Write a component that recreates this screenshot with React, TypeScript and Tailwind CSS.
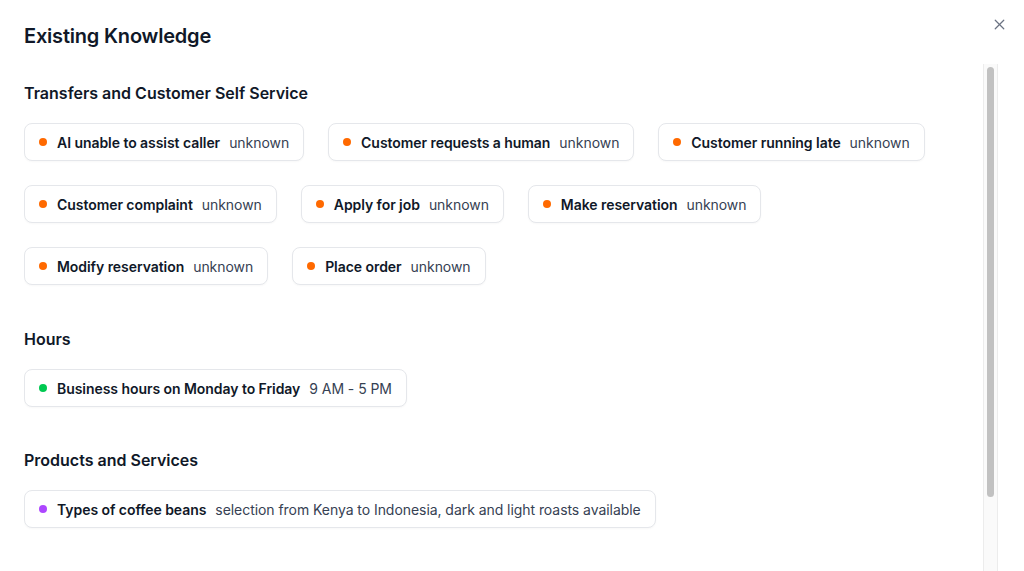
import { X } from "lucide-react";

interface Fact {
  label: string;
  value: string;
}

interface Section {
  title: string;
  dot: string;
  gap: string;
  items: Fact[];
}

const sections: Section[] = [
  {
    title: "Transfers and Customer Self Service",
    dot: "bg-orange-500",
    gap: "",
    items: [
      { label: "AI unable to assist caller", value: "unknown" },
      { label: "Customer requests a human", value: "unknown" },
      { label: "Customer running late", value: "unknown" },
      { label: "Customer complaint", value: "unknown" },
      { label: "Apply for job", value: "unknown" },
      { label: "Make reservation", value: "unknown" },
      { label: "Modify reservation", value: "unknown" },
      { label: "Place order", value: "unknown" },
    ],
  },
  {
    title: "Hours",
    dot: "bg-green-500",
    gap: "mt-[42px]",
    items: [{ label: "Business hours on Monday to Friday", value: "9 AM - 5 PM" }],
  },
  {
    title: "Products and Services",
    dot: "bg-purple-500",
    gap: "mt-[41px]",
    items: [
      {
        label: "Types of coffee beans",
        value: "selection from Kenya to Indonesia, dark and light roasts available",
      },
    ],
  },
];

function FactChip({ fact, dot }: { fact: Fact; dot: string }) {
  return (
    <div className="flex h-[38px] items-center rounded-lg border border-gray-200 bg-white px-[14px] text-[14px] tracking-[-0.004em] shadow-[0_1px_2px_rgba(0,0,0,0.03)]">
      <span className={`mr-[10px] h-2 w-2 shrink-0 rounded-full ${dot}`} />
      <span className="font-semibold text-gray-900">{fact.label}</span>
      <span className="ml-[9px] text-gray-700">{fact.value}</span>
    </div>
  );
}

export default function App() {
  return (
    <div
      className="relative flex h-[571px] w-[1024px] flex-col overflow-hidden bg-white text-gray-900"
      style={{ fontFamily: "Inter, 'Noto Sans', sans-serif" }}
    >
      <div className="flex h-16 shrink-0 items-start px-6 pt-[22px]">
        <h2 className="text-[20px] font-semibold leading-7 tracking-[-0.01em]">Existing Knowledge</h2>
      </div>
      <button
        type="button"
        aria-label="Close"
        className="absolute right-[16px] top-[16px] text-gray-500"
      >
        <X size={17} strokeWidth={1.75} />
      </button>

      <div className="ml-6 mr-[26px] flex min-h-0 flex-1">
        <div className="min-w-0 flex-1 overflow-hidden">
          <div className="pb-[130px] pt-[17px]">
            {sections.map((section) => (
              <div key={section.title} className={section.gap}>
                <h3 className="text-[16px] font-semibold leading-6">{section.title}</h3>
                <div className="mt-[18px] flex flex-wrap gap-6">
                  {section.items.map((fact) => (
                    <FactChip key={fact.label} fact={fact} dot={section.dot} />
                  ))}
                </div>
              </div>
            ))}
          </div>
        </div>

        {/* scrollbar */}
        <div className="flex w-[15px] shrink-0 flex-col border-x border-[#ececec] bg-[#fafafa] px-[3px] pt-[3px]">
          <div className="h-[430px] rounded-full bg-[#c1c1c1]" />
        </div>
      </div>
    </div>
  );
}
